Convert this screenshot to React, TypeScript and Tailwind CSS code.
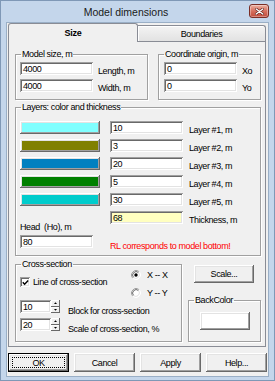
import React from "react";

const raised =
  "shadow-[inset_-1px_-1px_#696969,inset_1px_1px_#ffffff,inset_-2px_-2px_#a0a0a0,inset_2px_2px_#e3e3e3]";
const sunken =
  "shadow-[inset_1px_1px_#a0a0a0,inset_-1px_-1px_#ffffff,inset_2px_2px_#696969,inset_-2px_-2px_#e3e3e3]";
const group =
  "border border-[#a0a0a0] shadow-[inset_1px_1px_#ffffff,1px_1px_#ffffff]";

function Edit({
  w,
  value,
  yellow,
}: {
  w: string;
  value: string;
  yellow?: boolean;
}) {
  return (
    <div
      className={`${w} h-[13px] shrink-0 pl-[3px] pt-[1px] leading-[12px] ${
        yellow ? "bg-[#ffffc0]" : "bg-white"
      } ${sunken}`}
    >
      {value}
    </div>
  );
}

function Radio({ checked }: { checked?: boolean }) {
  return (
    <svg width="10" height="10" viewBox="0 0 10 10" className="shrink-0">
      <circle cx="5" cy="5" r="4" fill="#fff" />
      <path d="M1.82 8.18 A4.5 4.5 0 0 1 8.18 1.82" stroke="#a0a0a0" fill="none" />
      <path d="M8.18 1.82 A4.5 4.5 0 0 1 1.82 8.18" stroke="#ffffff" fill="none" />
      <path d="M2.53 7.47 A3.5 3.5 0 0 1 7.47 2.53" stroke="#696969" fill="none" />
      <path d="M7.47 2.53 A3.5 3.5 0 0 1 2.53 7.47" stroke="#e3e3e3" fill="none" />
      {checked && <circle cx="5" cy="5" r="1.7" fill="#000" />}
    </svg>
  );
}

function Spin() {
  const half =
    "flex-1 bg-[#f0f0f0] shadow-[inset_-1px_-1px_#696969,inset_1px_1px_#ffffff] flex items-center justify-center";
  return (
    <div className="w-[9px] h-[13px] flex flex-col shrink-0">
      <div className={half}>
        <svg width="3" height="2" viewBox="0 0 3 2">
          <path d="M0 2 L3 2 L1.5 0.3 Z" fill="#000" />
        </svg>
      </div>
      <div className={half}>
        <svg width="3" height="2" viewBox="0 0 3 2">
          <path d="M0 0 L3 0 L1.5 1.7 Z" fill="#000" />
        </svg>
      </div>
    </div>
  );
}

function Btn({ label, def }: { label: string; def?: boolean }) {
  if (def) {
    return (
      <div className={`w-[61px] h-[19px] border border-black bg-[#f0f0f0] ${raised} p-[3px] flex`}>
        <div className="flex-1 border border-dotted border-black flex items-center justify-center">
          {label}
        </div>
      </div>
    );
  }
  return (
    <div className={`w-[61px] h-[19px] bg-[#f0f0f0] ${raised} flex items-center justify-center`}>
      {label}
    </div>
  );
}

const layers = [
  { c: "bg-[#80ffff]", v: "10", l: "Layer #1, m" },
  { c: "bg-[#808000]", v: "3", l: "Layer #2, m" },
  { c: "bg-[#0080c0]", v: "20", l: "Layer #3, m" },
  { c: "bg-[#008000]", v: "5", l: "Layer #4, m" },
  { c: "bg-[#00cccc]", v: "30", l: "Layer #5, m" },
];

export default function App() {
  return (
    <div className="w-[275px] h-[381px] flex flex-col bg-[#c4d6eb] border border-[#7f98b6] px-[5px] pb-[3px] font-['Liberation_Sans',Arial,sans-serif] text-[9px] tracking-[-0.4px] leading-[12px] text-black">
      {/* title bar */}
      <div className="h-[21px] flex items-start shrink-0">
        <div className="flex-1 h-full flex items-center justify-center pr-[3px] text-[10.5px] tracking-normal text-[#1a1a1a]">
          Model dimensions
        </div>
        <div className="mt-[3px] w-[20px] h-[14px] rounded-[3px] border border-[#7a2e26] bg-linear-to-b from-[#eab0a2] via-[#d6705f] to-[#c24a3a] flex items-center justify-center shadow-[inset_0_0_0_1px_rgba(255,255,255,0.35)]">
          <svg width="9" height="7" viewBox="0 0 9 7">
            <path d="M1.2 1 L7.8 6 M7.8 1 L1.2 6" stroke="#5a1a14" strokeWidth="2.6" strokeLinecap="round" />
            <path d="M1.2 1 L7.8 6 M7.8 1 L1.2 6" stroke="#ffffff" strokeWidth="1.5" strokeLinecap="round" />
          </svg>
        </div>
      </div>

      {/* client */}
      <div className="flex-1 border border-[#9aafc6] bg-[#f0f0f0] flex flex-col pl-[1px]">
        <div className="w-[258px] flex flex-col">
          {/* tabs */}
          <div className="flex items-end h-[18px]">
            <div className="relative z-10 w-[130px] h-[19px] -mb-px border border-b-0 border-[#898c95] rounded-t-[3px] bg-[#f0f0f0] flex items-center justify-center font-bold tracking-[-0.2px]">
              Size
            </div>
            <div className="w-[128px] h-[16px] border border-b-0 border-l-0 border-[#898c95] rounded-tr-[3px] bg-linear-to-b from-[#f4f4f4] to-[#e2e2e2] shadow-[inset_1px_1px_#ffffff] flex items-center justify-center">
              Boundaries
            </div>
          </div>

          {/* panel */}
          <div className="h-[306px] border border-[#898c95] bg-[#f0f0f0] pt-[6px] pl-[6px] pr-[4px] pb-[4px] flex flex-col">
            {/* row 1 */}
            <div className="flex gap-[10px]">
              <fieldset className={`w-[133px] pl-[4px] pt-[2px] pb-[7px] ${group}`}>
                <legend className="ml-[1px] px-[1px] leading-[12px]">Model size, m</legend>
                <div className="flex flex-col gap-[4px]">
                  <div className="flex items-start h-[13px]">
                    <Edit w="w-[73px]" value="4000" />
                    <span className="ml-[5px] mt-[3px]">Length, m</span>
                  </div>
                  <div className="flex items-start h-[13px]">
                    <Edit w="w-[73px]" value="4000" />
                    <span className="ml-[5px] mt-[3px]">Width, m</span>
                  </div>
                </div>
              </fieldset>
              <fieldset className={`w-[103px] pl-[5px] pt-[2px] pb-[7px] ${group}`}>
                <legend className="px-[1px] leading-[12px]">Coordinate origin, m</legend>
                <div className="flex flex-col gap-[4px]">
                  <div className="flex items-start h-[13px]">
                    <Edit w="w-[73px]" value="0" />
                    <span className="ml-[5px] mt-[3px]">Xo</span>
                  </div>
                  <div className="flex items-start h-[13px]">
                    <Edit w="w-[73px]" value="0" />
                    <span className="ml-[5px] mt-[3px]">Yo</span>
                  </div>
                </div>
              </fieldset>
            </div>

            {/* layers */}
            <fieldset className={`mt-[1px] pl-[4px] pt-[8px] pb-[7px] ${group}`}>
              <legend className="ml-[1px] px-[1px] leading-[12px]">Layers: color and thickness</legend>
              <div className="flex flex-col gap-[5px]">
                {layers.map((r) => (
                  <div key={r.l} className="flex items-start h-[13px]">
                    <div className={`w-[80px] h-[13px] shrink-0 ${r.c} ${raised}`} />
                    <div className="ml-[10px]">
                      <Edit w="w-[73px]" value={r.v} />
                    </div>
                    <span className="ml-[6px] mt-[3px] whitespace-nowrap">{r.l}</span>
                  </div>
                ))}
                <div className="flex items-start h-[13px]">
                  <div className="w-[80px] shrink-0" />
                  <div className="ml-[10px]">
                    <Edit w="w-[73px]" value="68" yellow />
                  </div>
                  <span className="ml-[6px] mt-[3px] whitespace-nowrap">Thickness, m</span>
                </div>
              </div>
              <div className="-mt-[3px] flex h-[27px]">
                <div className="w-[90px] shrink-0 flex flex-col">
                  <span className="whitespace-nowrap">Head&nbsp; (Ho), m</span>
                  <div className="mt-[2px]">
                    <Edit w="w-[73px]" value="80" />
                  </div>
                </div>
                <div className="pt-[19px] text-[#ff0000] whitespace-nowrap">
                  RL corresponds to model bottom!
                </div>
              </div>
            </fieldset>

            {/* row 3 */}
            <div className="mt-[2px] flex gap-[6px]">
              <fieldset className={`w-[167px] pl-[4px] pb-[10px] ${group}`}>
                <legend className="ml-[1px] px-[1px] leading-[12px]">Cross-section</legend>
                <div className="flex h-[28px]">
                  <div className="w-[111px] shrink-0">
                    <div className="mt-[6px] flex items-center h-[12px]">
                      <div className={`w-[10px] h-[10px] bg-white ${sunken} flex items-center justify-center shrink-0`}>
                        <svg width="7" height="7" viewBox="0 0 7 7">
                          <path d="M0.8 3.3 L2.6 5.2 L6.2 1.4" stroke="#000" strokeWidth="1.4" fill="none" />
                        </svg>
                      </div>
                      <span className="ml-[3px] whitespace-nowrap">Line of cross-section</span>
                    </div>
                  </div>
                  <div className="flex flex-col gap-[8px]">
                    <div className="flex items-center h-[10px]">
                      <Radio checked />
                      <span className="ml-[6px] whitespace-nowrap">X -- X</span>
                    </div>
                    <div className="flex items-center h-[10px]">
                      <Radio />
                      <span className="ml-[6px] whitespace-nowrap">Y -- Y</span>
                    </div>
                  </div>
                </div>
                <div className="mt-[2px] flex flex-col gap-[5px]">
                  <div className="flex items-start h-[13px]">
                    <Edit w="w-[31px]" value="10" />
                    <Spin />
                    <span className="ml-[8px] mt-[5px] whitespace-nowrap">Block for cross-section</span>
                  </div>
                  <div className="flex items-start h-[13px]">
                    <Edit w="w-[31px]" value="20" />
                    <Spin />
                    <span className="ml-[8px] mt-[5px] whitespace-nowrap">Scale of cross-section, %</span>
                  </div>
                </div>
              </fieldset>
              <div className="w-[73px] flex flex-col">
                <div className={`mt-[7px] ml-[6px] w-[60px] h-[18px] bg-[#f0f0f0] ${raised} flex items-center justify-center`}>
                  Scale...
                </div>
                <fieldset className={`mt-[11px] flex-1 px-[4px] pt-[6px] ${group}`}>
                  <legend className="ml-[1px] px-[1px] leading-[12px]">BackColor</legend>
                  <div className="flex justify-center">
                    <div className={`w-[50px] h-[18px] bg-white ${raised}`} />
                  </div>
                </fieldset>
              </div>
            </div>
          </div>
        </div>

        {/* buttons */}
        <div className="mt-[6px] flex gap-[5px]">
          <Btn label="OK" def />
          <Btn label="Cancel" />
          <Btn label="Apply" />
          <Btn label="Help..." />
        </div>
      </div>
    </div>
  );
}
